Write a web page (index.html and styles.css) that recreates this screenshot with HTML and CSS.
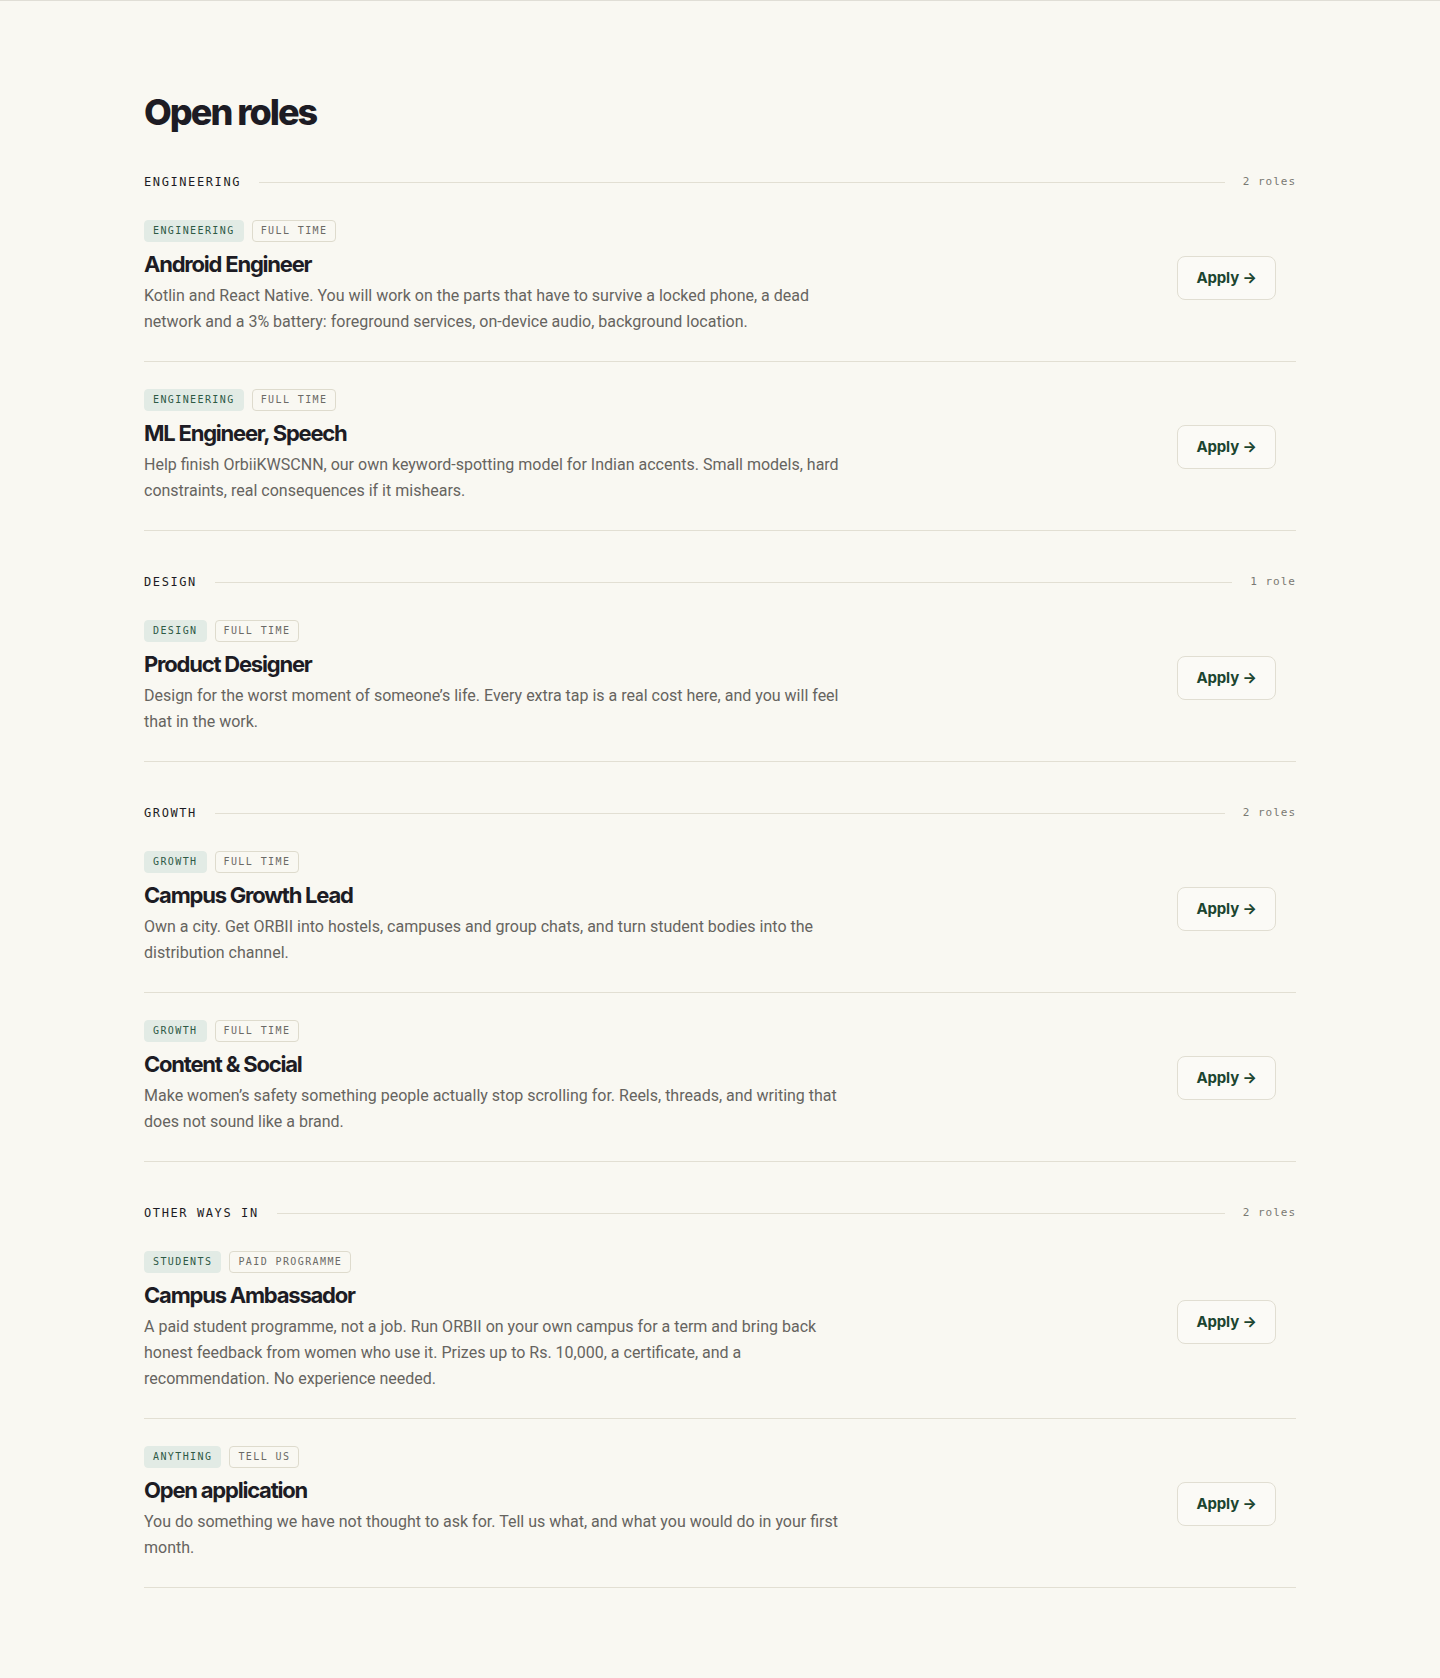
FILE: index.html
```html
<!DOCTYPE html>
<html lang="en">
<head>
<meta charset="utf-8">
<title>Open roles</title>
<link rel="stylesheet" href="styles.css">
</head>
<body>
<main class="page">
  <h1 class="title">Open roles</h1>

  <section class="group">
    <header class="group-head">
      <span class="group-name">ENGINEERING</span>
      <span class="group-rule"></span>
      <span class="group-count">2 roles</span>
    </header>
    <article class="role">
      <div class="role-body">
        <div class="tags"><span class="tag tag-team">ENGINEERING</span><span class="tag tag-type">FULL TIME</span></div>
        <h2 class="role-title">Android Engineer</h2>
        <p class="role-desc">Kotlin and React Native. You will work on the parts that have to survive a locked phone, a dead network and a 3% battery: foreground services, on-device audio, background location.</p>
      </div>
      <a class="apply" href="#">Apply →</a>
    </article>
    <article class="role">
      <div class="role-body">
        <div class="tags"><span class="tag tag-team">ENGINEERING</span><span class="tag tag-type">FULL TIME</span></div>
        <h2 class="role-title">ML Engineer, Speech</h2>
        <p class="role-desc">Help finish OrbiiKWSCNN, our own keyword-spotting model for Indian accents. Small models, hard constraints, real consequences if it mishears.</p>
      </div>
      <a class="apply" href="#">Apply →</a>
    </article>
  </section>

  <section class="group">
    <header class="group-head">
      <span class="group-name">DESIGN</span>
      <span class="group-rule"></span>
      <span class="group-count">1 role</span>
    </header>
    <article class="role">
      <div class="role-body">
        <div class="tags"><span class="tag tag-team">DESIGN</span><span class="tag tag-type">FULL TIME</span></div>
        <h2 class="role-title">Product Designer</h2>
        <p class="role-desc">Design for the worst moment of someone’s life. Every extra tap is a real cost here, and you will feel that in the work.</p>
      </div>
      <a class="apply" href="#">Apply →</a>
    </article>
  </section>

  <section class="group">
    <header class="group-head">
      <span class="group-name">GROWTH</span>
      <span class="group-rule"></span>
      <span class="group-count">2 roles</span>
    </header>
    <article class="role">
      <div class="role-body">
        <div class="tags"><span class="tag tag-team">GROWTH</span><span class="tag tag-type">FULL TIME</span></div>
        <h2 class="role-title">Campus Growth Lead</h2>
        <p class="role-desc">Own a city. Get ORBII into hostels, campuses and group chats, and turn student bodies into the distribution channel.</p>
      </div>
      <a class="apply" href="#">Apply →</a>
    </article>
    <article class="role">
      <div class="role-body">
        <div class="tags"><span class="tag tag-team">GROWTH</span><span class="tag tag-type">FULL TIME</span></div>
        <h2 class="role-title">Content &amp; Social</h2>
        <p class="role-desc">Make women’s safety something people actually stop scrolling for. Reels, threads, and writing that does not sound like a brand.</p>
      </div>
      <a class="apply" href="#">Apply →</a>
    </article>
  </section>

  <section class="group">
    <header class="group-head">
      <span class="group-name">OTHER WAYS IN</span>
      <span class="group-rule"></span>
      <span class="group-count">2 roles</span>
    </header>
    <article class="role">
      <div class="role-body">
        <div class="tags"><span class="tag tag-team">STUDENTS</span><span class="tag tag-type">PAID PROGRAMME</span></div>
        <h2 class="role-title">Campus Ambassador</h2>
        <p class="role-desc">A paid student programme, not a job. Run ORBII on your own campus for a term and bring back honest feedback from women who use it. Prizes up to Rs. 10,000, a certificate, and a recommendation. No experience needed.</p>
      </div>
      <a class="apply" href="#">Apply →</a>
    </article>
    <article class="role">
      <div class="role-body">
        <div class="tags"><span class="tag tag-team">ANYTHING</span><span class="tag tag-type">TELL US</span></div>
        <h2 class="role-title">Open application</h2>
        <p class="role-desc">You do something we have not thought to ask for. Tell us what, and what you would do in your first month.</p>
      </div>
      <a class="apply" href="#">Apply →</a>
    </article>
  </section>
</main>
</body>
</html>
```

FILE: styles.css
```css
* { box-sizing: border-box; }

html, body {
  margin: 0;
  padding: 0;
  background: #f9f8f2;
}

body {
  border-top: 1px solid #e0ded6;
  font-family: Inter, "Liberation Sans", sans-serif;
  color: #1d1c24;
}

.page {
  width: 1152px;
  margin: 0 auto;
  padding: 91px 0 90px;
}

.title {
  margin: 0 0 42px;
  font-size: 36px;
  line-height: 40px;
  font-weight: 800;
  letter-spacing: -0.055em;
  color: #1d1c24;
}

.group + .group {
  margin-top: 43px;
}

.group-head {
  display: flex;
  align-items: center;
  gap: 18px;
  height: 16px;
  margin-bottom: 3px;
}

.group-name {
  font-family: "DejaVu Sans Mono", "Liberation Mono", monospace;
  font-size: 12px;
  letter-spacing: 1.6px;
  font-weight: 400;
  color: #1d1c24;
  line-height: 16px;
}

.group-rule {
  flex: 1;
  height: 1px;
  background: #e2dfd3;
}

.group-count {
  font-family: "DejaVu Sans Mono", "Liberation Mono", monospace;
  font-size: 11px;
  letter-spacing: 1px;
  color: #7a7973;
  line-height: 16px;
}

.role {
  display: flex;
  align-items: center;
  justify-content: space-between;
  padding: 27px 20px 26px 0;
  border-bottom: 1px solid #e2dfd3;
}

.role-body {
  flex: 0 1 710px;
}

.tags {
  display: flex;
  gap: 8px;
  margin-bottom: 8px;
}

.tag {
  display: inline-block;
  height: 22px;
  padding: 0 8px;
  border: 1px solid transparent;
  border-radius: 4px;
  font-family: "DejaVu Sans Mono", "Liberation Mono", monospace;
  font-size: 10px;
  line-height: 20px;
  letter-spacing: 1.4px;
}

.tag-team {
  background: #e2ebe5;
  border-color: #e2ebe5;
  color: #2e5a45;
}

.tag-type {
  border-color: #dedbcd;
  color: #6b6a66;
}

.role-title {
  margin: 0 0 5px;
  font-size: 22px;
  line-height: 28px;
  font-weight: 700;
  letter-spacing: -0.055em;
  color: #1d1c24;
}

.role-desc {
  margin: 0;
  font-family: Roboto, "Liberation Sans", sans-serif;
  font-size: 16px;
  line-height: 26px;
  color: #66645f;
}

.apply {
  flex: none;
  display: inline-flex;
  align-items: center;
  justify-content: center;
  width: 99px;
  height: 44px;
  border: 1px solid #e1ded2;
  border-radius: 8px;
  background: #fbfaf6;
  font-size: 15px;
  font-weight: 700;
  color: #1b4530;
  text-decoration: none;
  letter-spacing: -0.01em;
}
```
